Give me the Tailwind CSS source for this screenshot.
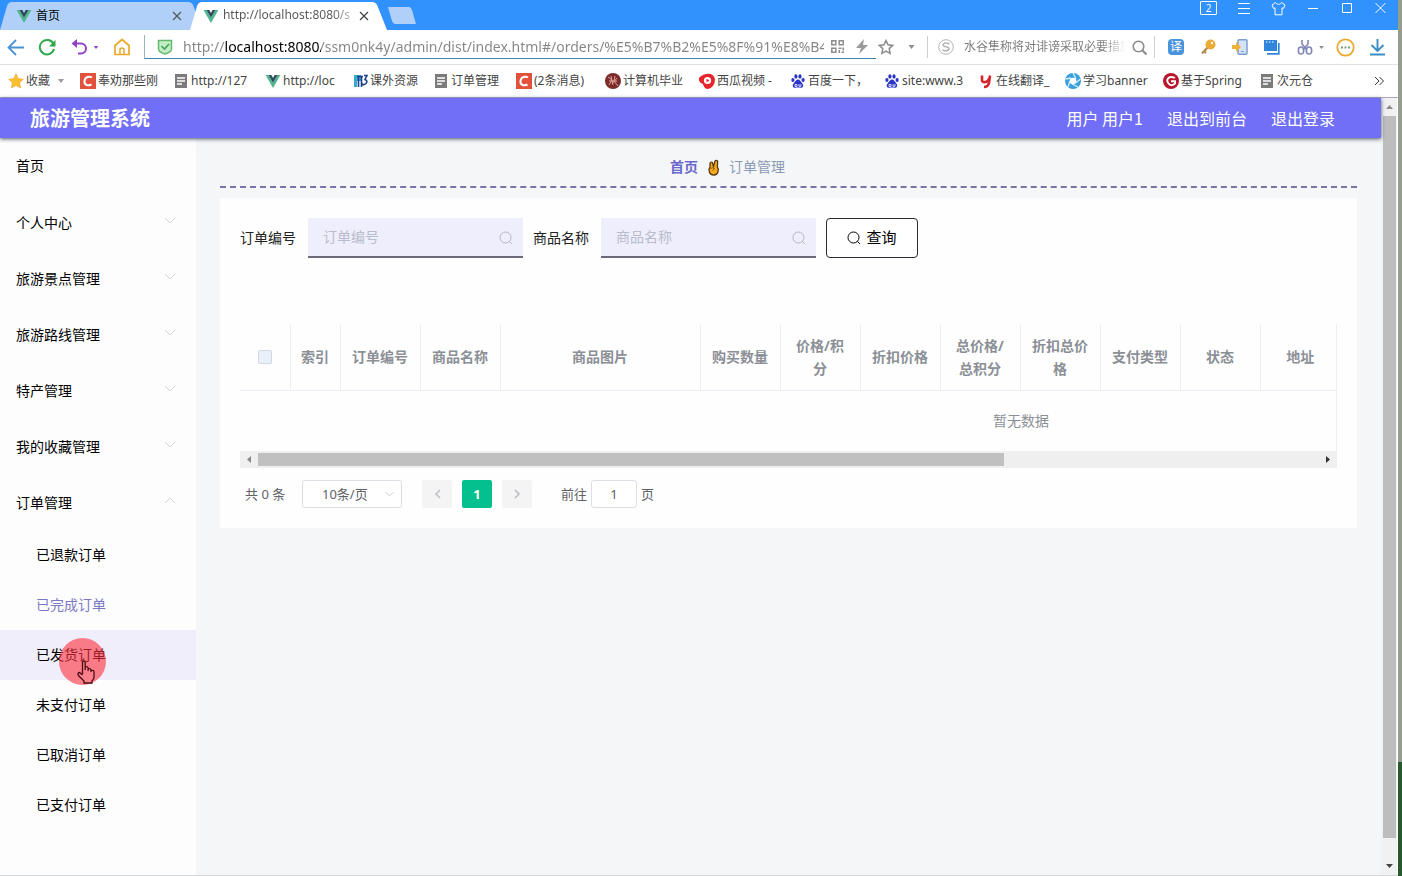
<!DOCTYPE html>
<html lang="zh-CN">
<head>
<meta charset="utf-8">
<meta name="viewport" content="width=device-width, initial-scale=1">
<title>旅游管理系统</title>
<script src="https://cdn.jsdelivr.net/npm/@tailwindcss/browser@4"></script>
</head>
<body class="flex min-h-screen bg-[#939f8e] font-['Noto_Sans','Noto_Sans_CJK_SC',sans-serif] text-sm text-black">

<svg class="hidden" aria-hidden="true">
  <symbol id="vue" viewBox="0 0 16 14"><path d="M0 0h3.200L8 8.400 12.800 0H16L8 14z" fill="#4fb58a"/><path d="M3.200 0H6.200L8 3.200 9.800 0h3L8 8.400z" fill="#2f4a5c"/></symbol>
  <symbol id="page" viewBox="0 0 12 14"><path d="M0 0h12v14H0z" fill="#7b7b7b"/><path d="M2 4h8M2 7h8M2 10h5" stroke="#fff" stroke-width="1.400"/></symbol>
  <symbol id="csdn" viewBox="0 0 16 16"><path d="M0 0h16v16H0z" fill="#e2513c"/><path d="M12 4.500C9.500 3 5 3.400 4.500 8s4 5 7 3.500" fill="none" stroke="#fff" stroke-width="2"/></symbol>
  <symbol id="paw" viewBox="0 0 14 14"><g fill="#2a35c8"><ellipse cx="1.900" cy="6" rx="1.600" ry="2"/><ellipse cx="4.900" cy="2.400" rx="1.600" ry="2.200"/><ellipse cx="9" cy="2.400" rx="1.600" ry="2.200"/><ellipse cx="12.100" cy="6" rx="1.600" ry="2"/><path d="M7 5.500c2 0 2.500 2 4 3.500 2.500 2.500.8 5-1.500 4.800-2-.3-3-.3-5 0C2 14 .5 11.500 3 9c1.500-1.500 2-3.500 4-3.500z"/></g><path d="M4 10.500h2v2H4zM8 10v2.300h2V10" fill="none" stroke="#fff" stroke-width=".8"/></symbol>
  <symbol id="down" viewBox="0 0 12 7"><path d="M1 1l5 5 5-5" fill="none" stroke="currentColor"/></symbol>
  <symbol id="lens" viewBox="0 0 14 14"><circle cx="6.500" cy="6.500" r="5.500" fill="none" stroke="currentColor"/><path d="M10.300 10.300l2.700 2.700" stroke="currentColor"/></symbol>
  <symbol id="close" viewBox="0 0 10 10"><path d="M1 1l8 8M9 1L1 9" stroke="currentColor" stroke-width="1.200"/></symbol>
  <symbol id="caret" viewBox="0 0 6 4"><path d="M0 0h6L3 4z" fill="currentColor"/></symbol>
</svg>

<div class="flex min-w-0 flex-1 flex-col border-b border-[#d5d7da] bg-white">

  <!-- Tab strip -->
  <div class="flex h-[30px] shrink-0 bg-[#3191fd]">
    <div class="relative flex w-[190px] items-center pl-4 pr-2">
      <svg class="absolute left-0 top-0 h-[30px] w-[196px]" viewBox="0 0 196 30"><path d="M0 30L7 6q1.500-4 5-4h176q4 0 5.500 4l2.500 7v17z" fill="#b0d0fa"/></svg>
      <svg class="relative mt-0.5 h-[13px] w-4"><use href="#vue"/></svg>
      <span class="relative ml-1 mt-0.5 flex-1 text-xs">首页</span>
      <button class="relative mt-0.5 text-[#555]" aria-label="关闭标签"><svg class="block size-[10px]"><use href="#close"/></svg></button>
    </div>
    <div class="relative flex w-[197px] items-center pl-[13px] pr-[18px]">
      <svg class="absolute left-0 top-0 h-[30px] w-[197px]" viewBox="0 0 197 30"><path d="M0 30L7 6q1.500-4 5-4h170q4 0 5.500 4L197 30z" fill="#fff"/></svg>
      <svg class="relative mt-0.5 h-[13px] w-4"><use href="#vue"/></svg>
      <span class="relative ml-1 w-[130px] whitespace-nowrap bg-linear-to-r from-[#555] from-85% to-[#ccc] bg-clip-text text-xs text-transparent">http://localhost:8080/s</span>
      <button class="relative ml-[7px] mt-0.5 text-[#444]" aria-label="关闭标签"><svg class="block size-[10px]"><use href="#close"/></svg></button>
    </div>
    <button class="ml-px mt-[7px] h-[17px] w-7" aria-label="新建标签"><svg class="block h-[17px] w-7" viewBox="0 0 28 17"><path d="M0 0h21q2 0 3 3l4 14H7q-2 0-3-3z" fill="#b0d0fa"/></svg></button>
    <div class="ml-auto flex h-4 items-center gap-5 pr-[11px] text-white">
      <button class="h-[14px] w-[17px] rounded-[1px] border border-white text-[10px] leading-3">2</button>
      <button aria-label="菜单"><svg class="block size-[14px]" viewBox="0 0 14 14"><path d="M1 2.500h12M1 7.500h12M1 12.500h12" stroke="#fff"/></svg></button>
      <button aria-label="皮肤"><svg class="block size-[15px]" viewBox="0 0 15 15"><path d="M4.500 1.500L1 4l1.500 3.500 1.500-.7v7h7v-7l1.500.7L14 4l-3.500-2.500C9 4 6 4 4.500 1.500z" fill="none" stroke="#fff"/></svg></button>
      <button aria-label="最小化"><svg class="block size-[14px]" viewBox="0 0 14 14"><path d="M2 7.500h10" stroke="#fff"/></svg></button>
      <button aria-label="最大化"><svg class="block size-[14px]" viewBox="0 0 14 14"><path d="M2.500 2.500h9v9h-9z" fill="none" stroke="#fff"/></svg></button>
      <button aria-label="关闭"><svg class="block size-[13px]" viewBox="0 0 13 13"><path d="M1.500 1l10 10M11.500 1l-10 10" stroke="#fff"/></svg></button>
    </div>
  </div>

  <!-- Address bar -->
  <div class="flex h-[35px] shrink-0 items-center border-b border-[#e0e1e3] pl-[7px] pr-3">
    <button aria-label="后退"><svg class="block size-[17px]" viewBox="0 0 17 17"><path d="M17 8.500H2M9 1L1.500 8.500 9 16" fill="none" stroke="#4a94d4" stroke-width="1.800"/></svg></button>
    <button class="ml-[14px]" aria-label="刷新"><svg class="block size-[18px]" viewBox="0 0 18 18"><path d="M15.500 6A7.200 7.200 0 1 0 16 11" fill="none" stroke="#2fa84a" stroke-width="2"/><path d="M17.500 2v6.500H11z" fill="#2fa84a"/></svg></button>
    <button class="ml-[15px]" aria-label="撤销"><svg class="block size-[17px]" viewBox="0 0 17 17"><path d="M2 4.500h8a5 5 0 0 1 0 10H7" fill="none" stroke="#8e44c4" stroke-width="2"/><path d="M6 0v9L.5 4.500z" fill="#8e44c4"/></svg></button>
    <svg class="ml-[5px] h-[3px] w-[6px] text-[#8e44c4]"><use href="#caret"/></svg>
    <button class="ml-[14px]" aria-label="主页"><svg class="block size-[18px]" viewBox="0 0 18 18"><path d="M2 7.500L9 1.500l7 6v9H2z" fill="none" stroke="#eba92b" stroke-width="1.700" stroke-linejoin="round"/><path d="M7 16v-5q2-2 4 0v5" fill="none" stroke="#eba92b" stroke-width="1.500"/></svg></button>
    <div class="ml-[13px] flex h-6 min-w-0 flex-1 items-center border-b border-l border-b-[#3f87b0] border-l-[#9fb3c0] pl-3 pr-2">
      <svg class="size-4 shrink-0" viewBox="0 0 16 16"><path d="M1.500 1.500h13V10q0 3-6.500 5-6.500-2-6.500-5z" fill="#c4ecc6" stroke="#62bb6c" stroke-width="1.500"/><path d="M4.500 7l3 3 4.500-5" fill="none" stroke="#3fa650" stroke-width="1.600"/></svg>
      <input aria-label="地址" class="ml-[10px] min-w-0 flex-1 bg-[linear-gradient(90deg,#858585_42px,#000_42px,#000_138px,#858585_138px)] bg-clip-text text-sm leading-5 text-transparent outline-none" value="http://localhost:8080/ssm0nk4y/admin/dist/index.html#/orders/%E5%B7%B2%E5%8F%91%E8%B4%A7">
      <svg class="ml-[7px] size-[13px] shrink-0" viewBox="0 0 13 13" fill="none" stroke="#8d8d8d" stroke-width="1.500"><path d="M.8.8h4v4h-4zM8.200.8h4v4h-4zM.8 8.200h4v4h-4zM7.500 8.200h3M12.200 7.500v3M8.200 10v3M10.500 12.200h2.500"/></svg>
      <svg class="ml-3 h-[15px] w-3 shrink-0" viewBox="0 0 12 15"><path d="M8 0L0 9h5l-2 6 9-9H7z" fill="#9a9a9a"/></svg>
    </div>
    <button class="ml-0.5" aria-label="收藏此页"><svg class="block size-4" viewBox="0 0 16 16"><path d="M8 1.500l2 4.300 4.700.6-3.500 3.200.9 4.700L8 12l-4.100 2.300.9-4.700L1.300 6.400 6 5.800z" fill="none" stroke="#8d8d8d" stroke-width="1.500"/></svg></button>
    <svg class="ml-[14px] h-1 w-[7px] text-[#8d8d8d]"><use href="#caret"/></svg>
    <div class="ml-3 flex h-[22px] w-[228px] items-center border-x border-[#cfcfcf] pl-[10px] pr-[7px]">
      <svg class="size-4 shrink-0" viewBox="0 0 16 16" fill="none" stroke="#b5b5b5"><circle cx="8" cy="8" r="7.300"/><path d="M11.500 5Q8 3 5.500 4.800 4 7 8 7.800q4.500 1 2.500 3.200Q8 12.600 4.500 11" stroke-width="1.600"/></svg>
      <input aria-label="搜索" class="ml-[10px] min-w-0 flex-1 bg-linear-to-r from-[#777] from-85% to-white bg-clip-text text-[12px] text-transparent outline-none" value="水谷隼称将对诽谤采取必要措施">
      <button class="ml-1.5 text-[#888]" aria-label="开始搜索"><svg class="block size-[15px]" viewBox="0 0 15 15"><circle cx="6.500" cy="6.500" r="5.300" fill="none" stroke="#8a8a8a" stroke-width="1.600"/><path d="M10.500 10.500l4 4" stroke="#8a8a8a" stroke-width="2"/></svg></button>
    </div>
    <div class="ml-[13px] flex items-center">
      <button class="size-4 rounded-sm bg-[#4a94dc] text-[12px] leading-4 text-white">译</button>
      <svg class="ml-4 size-4" viewBox="0 0 16 16"><path d="M8 8l-6 6.500M4 12l2 2" stroke="#b08a50" stroke-width="2.200"/><circle cx="10.500" cy="5.500" r="5" fill="#ecab34"/><circle cx="12" cy="4" r="1.200" fill="#fff"/></svg>
      <svg class="ml-4 size-4" viewBox="0 0 16 16"><rect x="6" y=".8" width="9" height="14.400" rx="1" fill="#d5e2f5" stroke="#7f9fd0" stroke-width="1.500"/><path d="M9 12.500h3" stroke="#7f9fd0"/><path d="M0 6h4V3l5 5-5 5v-3H0z" fill="#eeb13e"/></svg>
      <svg class="ml-4 size-4" viewBox="0 0 16 16"><path d="M0 1h13v11H0z" fill="#2f86dc"/><path d="M14.800 4v10.800H3" fill="none" stroke="#2f86dc" stroke-width="1.700"/><path d="M2 3h9" stroke="#fff" stroke-dasharray="1.500 1.500"/></svg>
      <svg class="ml-[17px] size-4" viewBox="0 0 16 16" fill="none" stroke="#8187b5" stroke-width="1.600"><path d="M5 1v4l5 6M11 1v4l-5 6"/><ellipse cx="4" cy="11.500" rx="2.700" ry="3.500"/><ellipse cx="12" cy="11.500" rx="2.700" ry="3.500"/></svg>
      <svg class="ml-[6px] h-[3px] w-[5px] text-[#888]"><use href="#caret"/></svg>
      <svg class="ml-3 size-[19px]" viewBox="0 0 19 19"><circle cx="9.500" cy="9.500" r="8.200" fill="none" stroke="#eda92d" stroke-width="1.800"/><path d="M5 9.500h2M8.500 9.500h2M12 9.500h2" stroke="#7a9a80" stroke-width="1.800"/></svg>
      <svg class="ml-[14px] size-[17px]" viewBox="0 0 17 17" fill="none" stroke="#3a8cc4" stroke-width="1.900"><path d="M8.500 0v12M2.500 6l6 6 6-6M1 15.500h15"/></svg>
    </div>
  </div>

  <!-- Bookmarks -->
  <div class="flex h-[33px] shrink-0 items-center whitespace-nowrap border-b border-[#a9a6c8] pl-2 pr-[14px] text-xs text-[#444]">
    <a href="#" class="flex w-[72px] shrink-0 items-center gap-0.5"><svg class="size-4" viewBox="0 0 16 16"><path d="M8 .8l2.300 4.700 5 .7-3.600 3.600.9 5.200L8 12.500 3.400 15l.9-5.200L.7 6.200l5-.7z" fill="#fbc02d" stroke="#e9a33a" stroke-width=".6"/></svg>收藏<svg class="ml-1.5 h-1 w-[6px] text-[#999]"><use href="#caret"/></svg></a>
    <a href="#" class="flex w-[95px] shrink-0 items-center gap-0.5"><svg class="size-4"><use href="#csdn"/></svg>奉劝那些刚</a>
    <a href="#" class="flex w-[90px] shrink-0 items-center gap-1"><svg class="h-[14px] w-3"><use href="#page"/></svg>http://127</a>
    <a href="#" class="flex w-[88px] shrink-0 items-center gap-0.5"><svg class="h-[13px] w-4"><use href="#vue"/></svg>http://loc</a>
    <a href="#" class="flex w-[82px] shrink-0 items-center gap-0.5"><svg class="h-[14px] w-[15px]" viewBox="0 0 15 14"><path d="M1 1h7v6H4v6H1z" fill="#3ba9cf"/><path d="M4 2.500h6M5.500 3v10M8.500 3v10M11 1.500h3l-2 4q3 1 1 4-2 2-4 .5" fill="none" stroke="#1c3f86" stroke-width="1.600"/></svg>课外资源</a>
    <a href="#" class="flex w-[81px] shrink-0 items-center gap-1"><svg class="h-[14px] w-3"><use href="#page"/></svg>订单管理</a>
    <a href="#" class="flex w-[89px] shrink-0 items-center gap-0.5"><svg class="size-4"><use href="#csdn"/></svg>(2条消息)</a>
    <a href="#" class="flex w-[94px] shrink-0 items-center gap-0.5"><svg class="size-4" viewBox="0 0 16 16"><circle cx="8" cy="8" r="8" fill="#7c2a2a"/><path d="M3 4l4 3-3 5M6 3l2 9M10 3l-1 5 4 5M12 5l-5 6M4 8h8" fill="none" stroke="#e0a39a"/></svg>计算机毕业</a>
    <a href="#" class="flex w-[91px] shrink-0 items-center gap-0.5"><svg class="size-4" viewBox="0 0 16 16"><path d="M5 1.500Q14-1 16 6q0 8-7 10-4 0-5-5-5-2-4-6 1-2 5-3.500z" fill="#e5242b"/><circle cx="8.500" cy="7.500" r="3.600" fill="#fff"/><path d="M7.500 5.800l3 1.700-3 1.700z" fill="#e5242b"/></svg>西瓜视频 -</a>
    <a href="#" class="flex w-[94px] shrink-0 items-center gap-0.5"><svg class="mx-px size-[14px]"><use href="#paw"/></svg>百度一下，</a>
    <a href="#" class="flex w-[94px] shrink-0 items-center gap-0.5"><svg class="mx-px size-[14px]"><use href="#paw"/></svg>site:www.3</a>
    <a href="#" class="flex w-[87px] shrink-0 items-center gap-0.5"><svg class="mx-px h-[15px] w-[14px]" viewBox="0 0 14 15"><path d="M3 1.500v5q0 2 3.500 1.500 3-.5 3.500-3.500M11 1.500L10 9q-1 4-5 4" fill="none" stroke="#d6232a" stroke-width="2.600"/></svg>在线翻译_</a>
    <a href="#" class="flex w-[98px] shrink-0 items-center gap-0.5"><svg class="size-4" viewBox="0 0 16 16"><circle cx="8" cy="8" r="8" fill="#3aa0dc"/><circle cx="8" cy="8" r="3.300" fill="#fff"/><path d="M8 0l3 6M15.500 6l-5 4M13 14l-6-3M3 14l2-6M.5 6L6 5" stroke="#d5effb" stroke-width="1.300"/></svg>学习banner</a>
    <a href="#" class="flex w-[98px] shrink-0 items-center gap-0.5"><svg class="size-4" viewBox="0 0 16 16"><circle cx="8" cy="8" r="8" fill="#b9162c"/><path d="M12 5Q8 3 5.500 5t0 5.500 6.500 0V8.200H8" fill="none" stroke="#fff" stroke-width="1.900"/></svg>基于Spring</a>
    <a href="#" class="flex shrink-0 items-center gap-1"><svg class="h-[14px] w-3"><use href="#page"/></svg>次元仓</a>
    <button class="ml-auto" aria-label="更多书签"><svg class="block size-[10px]" viewBox="0 0 10 10"><path d="M1 1l4 4-4 4M5.500 1l4 4-4 4" fill="none" stroke="#333"/></svg></button>
  </div>

  <!-- Page viewport -->
  <div class="flex min-h-0 flex-1">
    <div class="flex min-w-0 flex-1 flex-col bg-[#f4f6f8]">
      <header class="z-10 flex h-10 shrink-0 items-center justify-between bg-[#706ff6] pl-[30px] pr-[46px] font-['Noto_Sans_CJK_SC',sans-serif] text-white shadow-[0_1px_4px_rgba(0,20,40,0.7)]">
        <h1 class="text-xl font-bold">旅游管理系统</h1>
        <div class="flex gap-6 text-base">
          <span>用户 用户1</span>
          <a href="#">退出到前台</a>
          <a href="#">退出登录</a>
        </div>
      </header>
      <div class="flex flex-1">
        <nav class="flex w-[196px] shrink-0 flex-col bg-[#fdfdfe]">
          <a href="#" class="flex h-14 items-center px-4">首页</a>
          <button class="flex h-14 items-center justify-between pl-4 pr-5 pt-0.5">个人中心<svg class="mb-1.5 h-[7px] w-3 text-[#d3d5d9]"><use href="#down"/></svg></button>
          <button class="flex h-14 items-center justify-between pl-4 pr-5 pt-0.5">旅游景点管理<svg class="mb-1.5 h-[7px] w-3 text-[#d3d5d9]"><use href="#down"/></svg></button>
          <button class="flex h-14 items-center justify-between pl-4 pr-5 pt-0.5">旅游路线管理<svg class="mb-1.5 h-[7px] w-3 text-[#d3d5d9]"><use href="#down"/></svg></button>
          <button class="flex h-14 items-center justify-between pl-4 pr-5 pt-0.5">特产管理<svg class="mb-1.5 h-[7px] w-3 text-[#d3d5d9]"><use href="#down"/></svg></button>
          <button class="flex h-14 items-center justify-between pl-4 pr-5 pt-0.5">我的收藏管理<svg class="mb-1.5 h-[7px] w-3 text-[#d3d5d9]"><use href="#down"/></svg></button>
          <button class="flex h-14 items-center justify-between pl-4 pr-5 pt-0.5">订单管理<svg class="mb-1.5 h-[7px] w-3 rotate-180 text-[#d3d5d9]"><use href="#down"/></svg></button>
          <a href="#" class="flex h-[50px] items-center pl-9">已退款订单</a>
          <a href="#" class="flex h-[50px] items-center pl-9 text-[#7b79c4]">已完成订单</a>
          <a href="#" class="relative flex h-[50px] items-center bg-[#efeefa] pl-9">已发货订单
            <span class="absolute left-[59px] top-2 z-10 size-[47px] rounded-full bg-[#ff2f3c]/60"></span>
            <svg class="absolute left-[77px] top-[30px] z-10 h-6 w-[18px]" viewBox="0 0 18 24"><path d="M5.500 14V2.500q0-1.500 1.300-1.500T8.200 2.500V10M8.200 10V7q2.800-1 2.900 1v3M11.100 9q2.700-1 2.900 1v2M14 10.500q3-.8 3 1.500v5q0 2-2 4v2H7v-2Q4 18 1.500 15.500 0 13 2.500 12.500L5.500 15" fill="#ff8a90" fill-opacity=".4" stroke="#4a0a12" stroke-width="1.300"/></svg>
          </a>
          <a href="#" class="flex h-[50px] items-center pl-9">未支付订单</a>
          <a href="#" class="flex h-[50px] items-center pl-9">已取消订单</a>
          <a href="#" class="flex h-[50px] items-center pl-9">已支付订单</a>
        </nav>

        <main class="min-w-0 flex-1 px-6 pt-[10px]">
          <div class="flex h-10 items-center justify-center gap-2 border-b-2 border-dashed border-[#7775a8] pr-[122px]">
            <a href="#" class="font-bold text-[#6a67cc]">首页</a>
            <svg class="h-[17px] w-[15px]" viewBox="0 0 15 17"><path d="M4 8L4 4.500Q4.500 2.500 6.300 3.500L7.500 7.500 9 2q1.500-1.500 2.700.3L11.300 8q1.500 1.500.7 4.500-.8 3.500-4 3.500-4 0-4.700-3.500Q2.600 9.500 4 8z" fill="#f6a91b" stroke="#5a3b10" stroke-width="1.300"/><path d="M4.500 9.500q2-1.500 4 0l-2 2" fill="none" stroke="#8a5a12"/></svg>
            <span class="text-[#8b9bb4]">订单管理</span>
          </div>

          <section class="mt-[10px] bg-[#fefefe] p-5">
            <form class="flex flex-wrap items-center">
              <label for="order-no" class="w-[68px] text-[#222]">订单编号</label>
              <div class="relative mr-[10px]">
                <input id="order-no" placeholder="订单编号" class="block h-10 w-[215px] border-b-2 border-[#6c6a78] bg-[#eeeefd] pb-0.5 pl-[15px] pr-8 outline-none placeholder:text-[#b9bccb]">
                <svg class="absolute right-[10px] top-[13px] size-[14px] text-[#b3b6c2]"><use href="#lens"/></svg>
              </div>
              <label for="goods-name" class="w-[68px] text-[#222]">商品名称</label>
              <div class="relative mr-[10px]">
                <input id="goods-name" placeholder="商品名称" class="block h-10 w-[215px] border-b-2 border-[#6c6a78] bg-[#eeeefd] pb-0.5 pl-[15px] pr-8 outline-none placeholder:text-[#b9bccb]">
                <svg class="absolute right-[10px] top-[13px] size-[14px] text-[#b3b6c2]"><use href="#lens"/></svg>
              </div>
              <button type="button" class="flex h-10 w-[92px] items-center justify-center gap-[5px] rounded border border-[#2b2b33] bg-white text-[15px]"><svg class="size-[14px]"><use href="#lens"/></svg>查询</button>
            </form>

            <div class="mt-[66px] border-r border-[#ebeef5]">
              <div class="overflow-hidden">
                <table class="w-[1562px] table-fixed border-collapse text-[#8b8f96]">
                  <colgroup>
                    <col class="w-[50px]"><col class="w-[50px]"><col class="w-20"><col class="w-20"><col class="w-[200px]">
                    <col class="w-20"><col class="w-20"><col class="w-20"><col class="w-20"><col class="w-20"><col class="w-20"><col class="w-20"><col class="w-20"><col>
                  </colgroup>
                  <thead>
                    <tr class="h-[66px] border-b border-[#ebeef5] leading-[23px]">
                      <th class="border-r border-[#ebeef5]"><input type="checkbox" aria-label="全选" class="mx-auto block size-[14px] appearance-none rounded-xs border border-[#d3d9e2] bg-[#e8f1fa]"></th>
                      <th class="border-r border-[#ebeef5]">索引</th>
                      <th class="border-r border-[#ebeef5]">订单编号</th>
                      <th class="border-r border-[#ebeef5]">商品名称</th>
                      <th class="border-r border-[#ebeef5]">商品图片</th>
                      <th class="border-r border-[#ebeef5]">购买数量</th>
                      <th class="border-r border-[#ebeef5] px-[10px]">价格/积分</th>
                      <th class="border-r border-[#ebeef5]">折扣价格</th>
                      <th class="border-r border-[#ebeef5] px-[10px]">总价格/<br>总积分</th>
                      <th class="border-r border-[#ebeef5] px-[10px]">折扣总价格</th>
                      <th class="border-r border-[#ebeef5]">支付类型</th>
                      <th class="border-r border-[#ebeef5]">状态</th>
                      <th>地址</th>
                      <th></th>
                    </tr>
                  </thead>
                  <tbody>
                    <tr class="h-[61px]"><td colspan="14" class="text-center">暂无数据</td></tr>
                  </tbody>
                </table>
              </div>
              <div class="flex h-[17px] items-center bg-[#efefef]">
                <svg class="mx-[7px] h-[7px] w-1" viewBox="0 0 4 7"><path d="M4 0v7L0 3.500z" fill="#888"/></svg>
                <div class="flex flex-1"><div class="h-[13px] w-[70.2%] bg-[#c0c0c0]"></div></div>
                <svg class="mx-[6px] h-[7px] w-1" viewBox="0 0 4 7"><path d="M0 0v7l4-3.500z" fill="#333"/></svg>
              </div>
            </div>

            <div class="mt-3 flex h-7 items-center pl-[5px] text-[13px] text-[#606266]">
              <span class="w-[57px]">共 0 条</span>
              <div class="relative">
                <select aria-label="每页条数" class="block h-7 w-[100px] appearance-none rounded-[3px] border border-[#dcdfe6] bg-white pl-[19px] outline-none"><option>10条/页</option></select>
                <svg class="pointer-events-none absolute right-2 top-[11px] h-[6px] w-[9px] text-[#b8bcc5]"><use href="#down"/></svg>
              </div>
              <button class="ml-5 flex h-7 w-[30px] items-center justify-center rounded-xs bg-[#f4f4f5]" aria-label="上一页"><svg class="h-[10px] w-[7px]" viewBox="0 0 7 10"><path d="M6 1L2 5l4 4" fill="none" stroke="#bcbec4" stroke-width="1.600"/></svg></button>
              <button class="ml-[10px] h-7 w-[30px] rounded-xs bg-[#03c08e] font-bold text-white">1</button>
              <button class="ml-[10px] flex h-7 w-[30px] items-center justify-center rounded-xs bg-[#f4f4f5]" aria-label="下一页"><svg class="h-[10px] w-[7px]" viewBox="0 0 7 10"><path d="M1 1l4 4-4 4" fill="none" stroke="#bcbec4" stroke-width="1.600"/></svg></button>
              <label for="goto" class="ml-[29px]">前往</label>
              <input id="goto" value="1" class="mx-1 h-7 w-[46px] rounded-[3px] border border-[#dcdfe6] bg-white text-center outline-none">
              <span>页</span>
            </div>
          </section>
        </main>
      </div>
    </div>

    <!-- Vertical scroll bar -->
    <div class="flex w-4 shrink-0 flex-col items-center bg-[#f1f1f1]">
      <svg class="my-[7px] h-1 w-[7px] shrink-0" viewBox="0 0 7 4"><path d="M0 4h7L3.500 0z" fill="#8c8c8c"/></svg>
      <div class="flex w-[13px] flex-1 flex-col"><div class="h-[97.5%] w-full bg-[#bdbdbd]"></div></div>
      <svg class="my-[7px] h-1 w-[7px] shrink-0" viewBox="0 0 7 4"><path d="M0 0h7L3.500 4z" fill="#444"/></svg>
    </div>
    <div class="w-px bg-white"></div>
  </div>
</div>
<!-- Sliver of desktop wallpaper -->
<div class="flex w-1 shrink-0 flex-col bg-[#939f8e]"><div class="mt-auto h-[13%] bg-[#265a2c]"></div></div>
</body>
</html>
